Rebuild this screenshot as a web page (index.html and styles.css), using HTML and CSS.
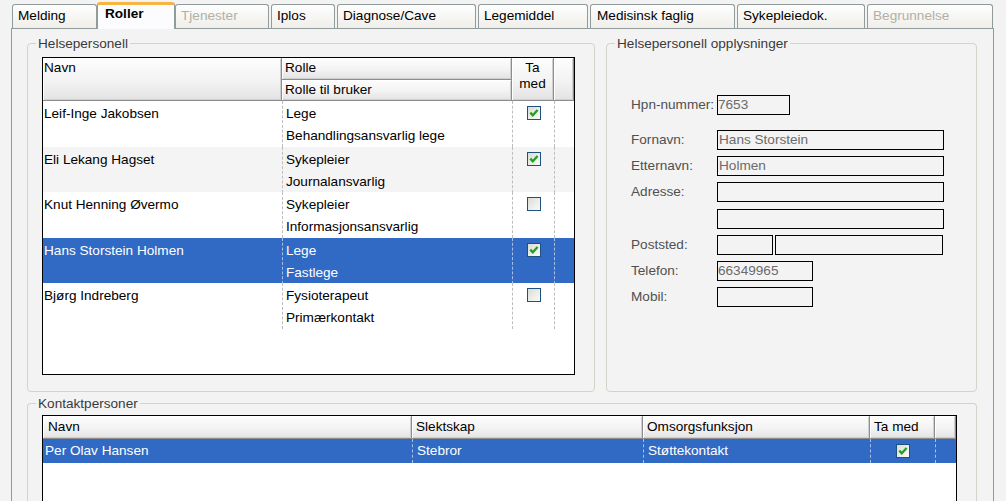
FILE: index.html
```html
<!DOCTYPE html>
<html lang="no">
<head>
<meta charset="utf-8">
<title>Roller</title>
<link rel="stylesheet" href="styles.css">
</head>
<body>
<div class="tabs">
  <div class="tab tab-melding">Melding</div>
  <div class="tab active tab-roller">Roller</div>
  <div class="tab disabled tab-tjenester">Tjenester</div>
  <div class="tab tab-iplos">Iplos</div>
  <div class="tab tab-diagnose">Diagnose/Cave</div>
  <div class="tab tab-legemiddel">Legemiddel</div>
  <div class="tab tab-medisinsk">Medisinsk faglig</div>
  <div class="tab tab-sykepleie">Sykepleiedok.</div>
  <div class="tab disabled tab-begrunnelse">Begrunnelse</div>
</div>
<div class="panel">
  <div class="top-row">
    <fieldset class="group group-hp">
      <legend>Helsepersonell</legend>
      <div class="hp-inner">
        <div class="hp-grid">
          <div class="hp-head">
            <div class="hc hc-navn">Navn</div>
            <div class="hc hc-rolle">Rolle</div>
            <div class="hc hc-rtb">Rolle til bruker</div>
            <div class="hc hc-tamed">Ta<br>med</div>
            <div class="hc hc-blank"></div>
          </div>
          <div class="hp-row">
            <div class="c c-navn">Leif-Inge Jakobsen</div>
            <div class="c c-rolle">Lege<br>Behandlingsansvarlig lege</div>
            <div class="c c-cb"><span class="cb"><svg width="12" height="12" viewBox="0 0 12 12"><polyline points="2.3,5.6 4.8,8.2 9.6,3" fill="none" stroke="#21a121" stroke-width="2.3"/></svg></span></div>
            <div class="c c-blank"></div>
          </div>
          <div class="hp-row alt">
            <div class="c c-navn">Eli Lekang Hagset</div>
            <div class="c c-rolle">Sykepleier<br>Journalansvarlig</div>
            <div class="c c-cb"><span class="cb"><svg width="12" height="12" viewBox="0 0 12 12"><polyline points="2.3,5.6 4.8,8.2 9.6,3" fill="none" stroke="#21a121" stroke-width="2.3"/></svg></span></div>
            <div class="c c-blank"></div>
          </div>
          <div class="hp-row">
            <div class="c c-navn">Knut Henning Øvermo</div>
            <div class="c c-rolle">Sykepleier<br>Informasjonsansvarlig</div>
            <div class="c c-cb"><span class="cb"></span></div>
            <div class="c c-blank"></div>
          </div>
          <div class="hp-row sel">
            <div class="c c-navn">Hans Storstein Holmen</div>
            <div class="c c-rolle">Lege<br>Fastlege</div>
            <div class="c c-cb"><span class="cb"><svg width="12" height="12" viewBox="0 0 12 12"><polyline points="2.3,5.6 4.8,8.2 9.6,3" fill="none" stroke="#21a121" stroke-width="2.3"/></svg></span></div>
            <div class="c c-blank"></div>
          </div>
          <div class="hp-row">
            <div class="c c-navn">Bjørg Indreberg</div>
            <div class="c c-rolle">Fysioterapeut<br>Primærkontakt</div>
            <div class="c c-cb"><span class="cb"></span></div>
            <div class="c c-blank"></div>
          </div>
        </div>
      </div>
    </fieldset>
    <fieldset class="group group-info">
      <legend>Helsepersonell opplysninger</legend>
      <div class="form">
        <div class="lbl">Hpn-nummer:</div><div class="inp w-hpn">7653</div>
        <div class="lbl">Fornavn:</div><div class="inp w-full">Hans Storstein</div>
        <div class="lbl">Etternavn:</div><div class="inp w-full">Holmen</div>
        <div class="lbl">Adresse:</div><div class="inp w-full"></div>
        <div class="lbl"></div><div class="inp w-full"></div>
        <div class="lbl">Poststed:</div><div class="post"><div class="inp w-post1"></div><div class="inp w-post2"></div></div>
        <div class="lbl">Telefon:</div><div class="inp w-tel">66349965</div>
        <div class="lbl">Mobil:</div><div class="inp w-tel"></div>
      </div>
    </fieldset>
  </div>
  <fieldset class="group group-kp">
    <legend>Kontaktpersoner</legend>
    <div class="kp-inner">
      <div class="kp-grid">
        <div class="kp-head">
          <div class="kh kh-navn">Navn</div>
          <div class="kh">Slektskap</div>
          <div class="kh">Omsorgsfunksjon</div>
          <div class="kh">Ta med</div>
          <div class="kh"></div>
        </div>
        <div class="kp-row sel">
          <div class="k k-navn">Per Olav Hansen</div>
          <div class="k">Stebror</div>
          <div class="k">Støttekontakt</div>
          <div class="k k-cb"><span class="cb"><svg width="12" height="12" viewBox="0 0 12 12"><polyline points="2.3,5.6 4.8,8.2 9.6,3" fill="none" stroke="#21a121" stroke-width="2.3"/></svg></span></div>
          <div class="k"></div>
        </div>
      </div>
    </div>
  </fieldset>
</div>
</body>
</html>
```

FILE: styles.css
```css
* { box-sizing: border-box; }
html, body { margin: 0; height: 100%; overflow: hidden; }
body {
  background: #f3f3f3;
  font-family: "Liberation Sans", Arial, sans-serif;
  font-size: 13.6px;
  color: #000;
}

/* Tabs */
.tabs {
  display: flex;
  align-items: flex-end;
  height: 28px;
  padding-left: 12px;
}
.tab {
  height: 24px;
  margin-left: 2px;
  border: 1px solid #919b9c;
  border-bottom: none;
  border-radius: 3px 3px 0 0;
  background: linear-gradient(#fefefe, #efeee9);
  padding: 3px 0 0 5px;
  line-height: 16px;
  white-space: nowrap;
  color: #000;
}
.tab.disabled { color: #b2b0a6; }
.tab.active {
  position: relative;
  z-index: 1;
  height: 27px;
  margin-bottom: -1px;
  margin-left: 0;
  border-top: 3px solid #f5b540;
  background: #fcfcfe;
  font-weight: bold;
  padding: 1px 0 0 7px;
}
.tab-melding { width: 85px; margin-left: 0; }
.tab-roller { width: 78px; }
.tab-tjenester { width: 94px; margin-left: 0; }
.tab-iplos { width: 64px; }
.tab-diagnose { width: 139px; }
.tab-legemiddel { width: 110px; }
.tab-medisinsk { width: 145px; padding-left: 6px; }
.tab-sykepleie { width: 128px; }
.tab-begrunnelse { width: 126px; }

/* Panel */
.panel {
  width: 983px;
  height: 473px;
  margin-left: 11px;
  border: 1px solid #919b9c;
  border-bottom: none;
  background: #f3f3f3;
  padding: 7px 0 0 15px;
  overflow: hidden;
}
.top-row { display: flex; gap: 11px; align-items: stretch; }

.group {
  margin: 0;
  padding: 0;
  min-width: 0;
  border: 1px solid #d3d3cb;
  border-radius: 4px;
}
.group legend {
  margin-left: 8px;
  padding: 0 2px;
  line-height: 15px;
  color: #3a3a3a;
}
.group-hp { width: 568px; }
.group-info { width: 371px; }
.group-kp {
  width: 950px;
  margin-top: 4px;
  border-bottom: none;
  border-radius: 4px 4px 0 0;
}

/* Helsepersonell grid */
.hp-inner { padding: 6px 0 16px 14px; }
.hp-grid {
  width: 533px;
  height: 318px;
  border: 1px solid #000;
  background: #fff;
}
.hp-head, .hp-row {
  display: grid;
  grid-template-columns: 239px 230px 42px 20px;
}
.hp-head { grid-template-rows: 22px 21px; }
.hc, .kh {
  background: linear-gradient(#fdfdfd, #f3f3f3 55%, #e3e3e3);
  border-right: 1px solid #8d8d8d;
  border-bottom: 1px solid #8d8d8d;
  box-shadow: inset 1px 1px 0 #fff, inset -1px -1px 0 #cfcfcf;
  line-height: 16px;
  white-space: nowrap;
}
.hc-navn { grid-row: 1 / 3; grid-column: 1; padding: 2px 0 0 1px; }
.hc-rolle { grid-row: 1; grid-column: 2; padding: 2px 0 0 3px; }
.hc-rtb { grid-row: 2; grid-column: 2; padding: 2px 0 0 3px; }
.hc-tamed { grid-row: 1 / 3; grid-column: 3; text-align: center; padding-top: 2px; }
.hc-blank { grid-row: 1 / 3; grid-column: 4; }

.hp-row { height: 45.5px; }
.hp-row.alt { background: #f4f4f4; }
.hp-row.sel { background: #316ac5; color: #fff; }
.c {
  line-height: 22px;
  padding-top: 2px;
  white-space: nowrap;
}
.c + .c { border-left: 1px dashed #bdbdbd; }
.sel .c + .c, .sel .k + .k { border-left-color: #a9c0e6; }
.c-navn { padding-left: 1px; }
.c-rolle { padding-left: 3px; }
.c-cb { display: flex; justify-content: center; padding-top: 5px; }

.cb {
  display: block;
  width: 14px;
  height: 14px;
  border: 1px solid #1c5180;
  background: linear-gradient(135deg, #dcdcd6, #fafaf8);
}
.cb svg { display: block; }

/* Info form */
.form {
  display: grid;
  grid-template-columns: 86px auto;
  grid-template-rows: 35px 26px 26px 27px 26px 26px 26px 20px;
  align-items: start;
  justify-items: start;
  padding: 44px 0 0 24px;
  color: #505050;
}
.lbl { line-height: 20px; white-space: nowrap; }
.inp {
  height: 20px;
  border: 1px solid #000;
  background: #f3f3f3;
  line-height: 18px;
  padding-left: 1px;
  color: #6b6b6b;
  white-space: nowrap;
}
.post { display: flex; gap: 2px; }
.w-hpn { width: 73px; padding-left: 0; }
.w-full { width: 227px; }
.w-post1 { width: 56px; }
.w-post2 { width: 168px; }
.w-tel { width: 96px; padding-left: 0; }

/* Kontaktpersoner grid */
.kp-inner { padding: 4px 0 0 14px; }
.kp-grid {
  width: 915px;
  height: 86px;
  border: 1px solid #000;
  border-bottom: none;
  background: #fff;
}
.kp-head, .kp-row {
  display: grid;
  grid-template-columns: 369px 231px 227px 65px 21px;
}
.kp-head { height: 23px; }
.kh { padding: 3px 0 0 4px; }
.kh-navn { padding-left: 5px; }
.kp-row { height: 24px; }
.kp-row.sel { background: #316ac5; color: #fff; }
.k { line-height: 24px; padding-left: 4px; white-space: nowrap; }
.k + .k { border-left: 1px dashed #bdbdbd; }
.k-navn { padding-left: 2px; }
.k-cb { display: flex; justify-content: center; align-items: center; padding-left: 0; }
```
